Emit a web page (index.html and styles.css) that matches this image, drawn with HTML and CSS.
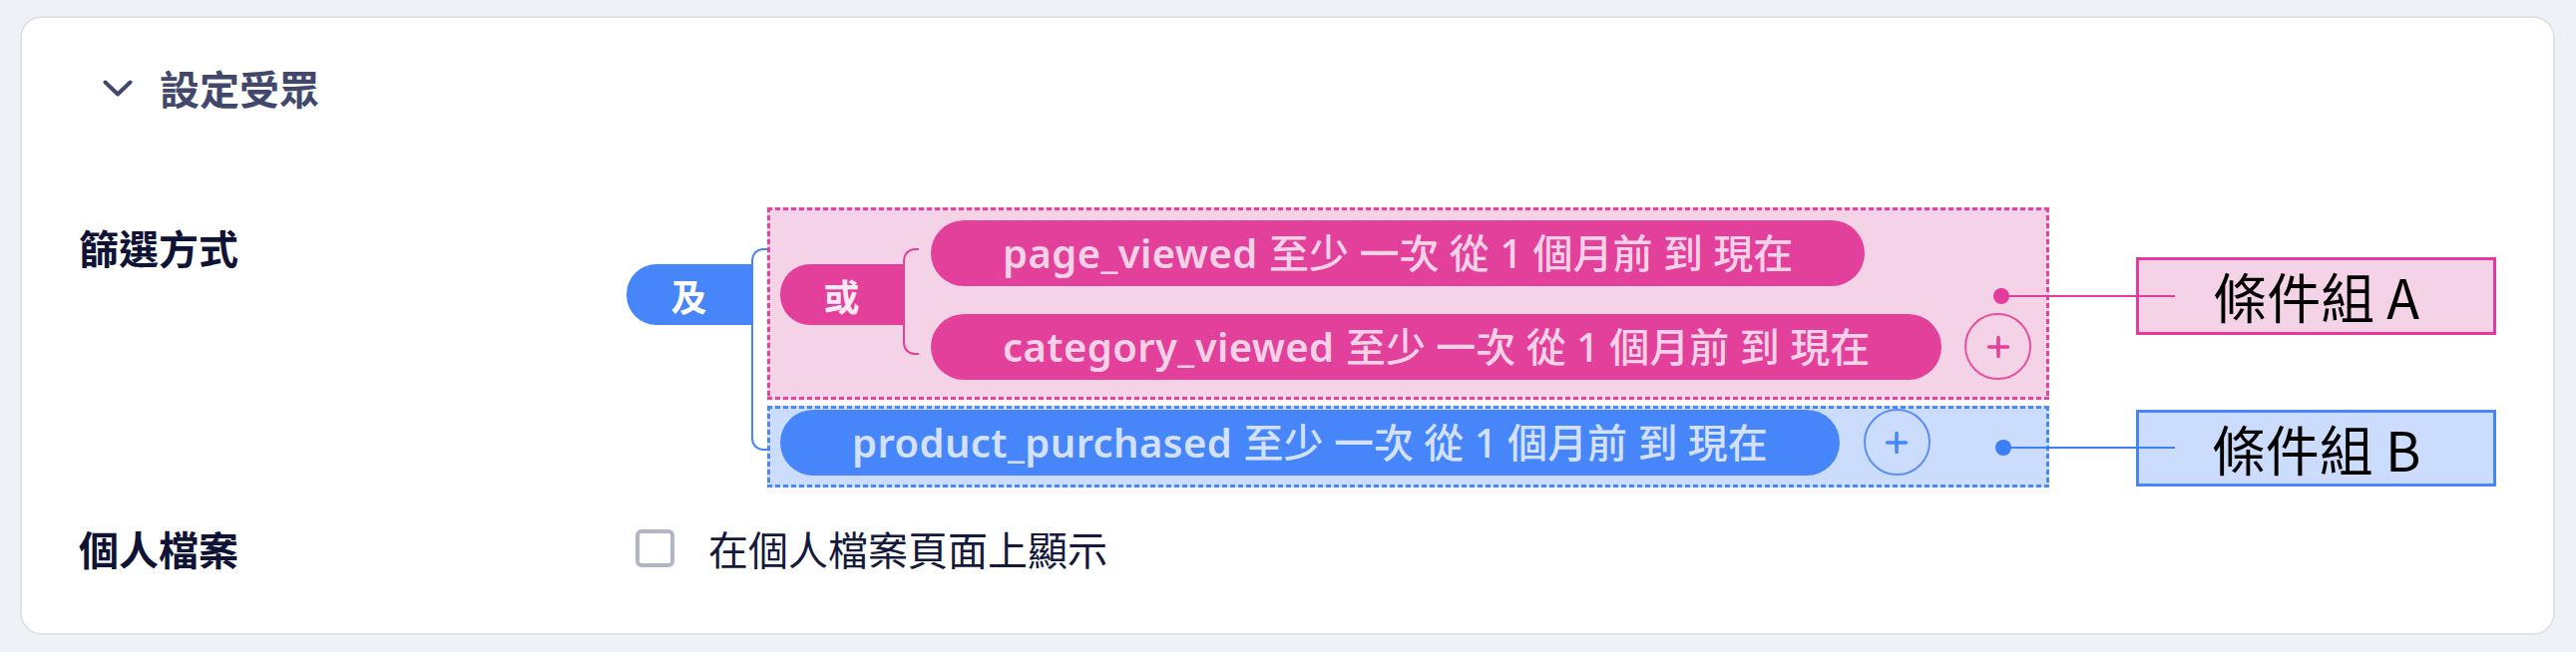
FILE: index.html
```html
<!DOCTYPE html>
<html lang="zh-Hant">
<head>
<meta charset="utf-8">
<title>設定受眾</title>
<link rel="stylesheet" href="styles.css">
</head>
<body>
<section class="card">
  <header class="card-head">
    <svg class="chev" viewBox="0 0 30 17" width="30" height="17" aria-hidden="true"><polyline points="2.5,2.5 15,14.5 27.5,2.5"/></svg>
    <h2 class="card-title">設定受眾</h2>
  </header>

  <div class="field filter-field">
    <div class="field-label">篩選方式</div>
    <div class="tree">
      <div class="op op-and">及</div>
      <div class="bracket bracket-and"></div>
      <div class="groups">
        <div class="group group-a">
          <div class="op op-or">或</div>
          <div class="bracket bracket-or"></div>
          <div class="rows">
            <div class="row">
              <div class="pill pill-pink"><span class="ev">page_viewed</span> 至少 一次 從 1 個月前 到 現在</div>
            </div>
            <div class="row">
              <div class="pill pill-pink"><span class="ev">category_viewed</span> 至少 一次 從 1 個月前 到 現在</div>
              <button class="add add-pink" type="button" aria-label="新增"><svg viewBox="0 0 24 24" width="24" height="24"><path d="M12 2.5v19M2.5 12h19"/></svg></button>
            </div>
          </div>
          <span class="pin pin-a"></span>
        </div>
        <div class="group group-b">
          <div class="row row-b">
            <div class="pill pill-blue"><span class="ev">product_purchased</span> 至少 一次 從 1 個月前 到 現在</div>
            <button class="add add-blue" type="button" aria-label="新增"><svg viewBox="0 0 24 24" width="24" height="24"><path d="M12 2.5v19M2.5 12h19"/></svg></button>
          </div>
          <span class="pin pin-b"></span>
        </div>
      </div>
      <div class="notes">
        <div class="note note-a">條件組 A</div>
        <div class="note note-b">條件組 B</div>
      </div>
    </div>
  </div>

  <div class="field profile-field">
    <div class="field-label">個人檔案</div>
    <label class="check"><span class="box"></span><span class="check-text">在個人檔案頁面上顯示</span></label>
  </div>
</section>
</body>
</html>
```

FILE: styles.css
```css
* { box-sizing: border-box; }
html, body { margin: 0; }
body {
  background: #eef1f5;
  font-family: "Noto Sans", "Noto Sans CJK TC", sans-serif;
}

.card {
  margin: 16px 21px 19px 20px;
  background: #fff;
  border: 2px solid #dfe2e8;
  border-radius: 22px;
  padding: 50px 57px 65px;
}

.card-head {
  display: flex;
  align-items: center;
  gap: 27px;
  height: 40px;
  margin-left: 24px;
}
.chev {
  fill: none;
  stroke: #41486c;
  stroke-width: 4;
  stroke-linecap: round;
  stroke-linejoin: round;
}
.card-title {
  margin: 0;
  font: 700 40px/40px "Noto Sans CJK TC", sans-serif;
  color: #41486c;
}

.field {
  display: grid;
  grid-template-columns: 549px auto;
  align-items: start;
}
.filter-field { margin-top: 100px; }
.profile-field { margin-top: 41px; align-items: center; }
.field-label {
  font: 700 40px/40px "Noto Sans CJK TC", sans-serif;
  color: #0f1437;
}
.filter-field .field-label { margin-top: 20px; }

/* tree */
.tree {
  display: flex;
  align-items: flex-start;
}
.op {
  height: 61px;
  display: flex;
  align-items: center;
  justify-content: center;
  font: 700 36px/1 "Noto Sans CJK TC", sans-serif;
  border-radius: 30px 0 0 30px;
  flex: none;
}
.op-and {
  width: 125px;
  margin-top: 57px;
  background: #4785fb;
  color: #fff;
}
.op-or {
  width: 123px;
  margin-top: 44px;
  background: #e2409b;
  color: #fde9f3;
}
.bracket {
  width: 16px;
  flex: none;
  align-self: stretch;
  border: 2px solid;
  border-right: 0;
  border-radius: 12px 0 0 12px;
}
.bracket-and { border-color: #4785fb; margin: 41px 0 37px; }
.bracket-or { border-color: #e2409b; margin: 28px 12px 25px 0; }

.groups {
  display: flex;
  flex-direction: column;
  gap: 6px;
}
.group {
  --dash: #e8409d;
  position: relative;
  display: flex;
  align-items: flex-start;
  background:
    repeating-linear-gradient(to right, var(--dash) 0 5px, transparent 5px 8px) left top / 100% 3px no-repeat,
    repeating-linear-gradient(to right, var(--dash) 0 5px, transparent 5px 8px) left bottom / 100% 3px no-repeat,
    repeating-linear-gradient(to bottom, var(--dash) 0 5px, transparent 5px 8px) left top / 3px 100% no-repeat,
    repeating-linear-gradient(to bottom, var(--dash) 0 5px, transparent 5px 8px) right top / 3px 100% no-repeat,
    var(--fill);
}
.group-a {
  --dash: #e8409d;
  --fill: #f4d3e6;
  padding: 13px 18px 20px 13px;
}
.group-b {
  --dash: #4a86fb;
  --fill: #cbdcfc;
  padding: 3px 18px 12px 13px;
}

.rows {
  display: flex;
  flex-direction: column;
  gap: 27px;
}
.row {
  display: flex;
  align-items: center;
  gap: 23px;
}
.row-b { gap: 24px; }

.pill {
  height: 66px;
  padding: 0 72px;
  border-radius: 33px;
  display: flex;
  align-items: center;
  white-space: pre;
  font: 500 40px/1 "Noto Sans", "Noto Sans CJK TC", sans-serif;
}
.ev {
  font-weight: 600;
  letter-spacing: 0.4px;
  margin-right: 1px;
}
.pill-pink { background: #e2409b; color: #f7d2e7; }
.pill-blue { background: #4785fb; color: #d3e1fe; }

.add {
  width: 67px;
  height: 67px;
  flex: none;
  padding: 0;
  border-radius: 50%;
  border: 2px solid;
  background: transparent;
  display: flex;
  align-items: center;
  justify-content: center;
}
.add svg {
  fill: none;
  stroke-width: 3.5;
  stroke-linecap: round;
}
.add-pink { border-color: #e5519f; }
.add-pink svg { stroke: #e2409b; }
.add-blue { border-color: #5a90f6; }
.add-blue svg { stroke: #4785fb; }

/* annotation pins (dot + leader line, drawn over the boxes) */
.pin {
  position: absolute;
  right: -126px;
  height: 16px;
  background: linear-gradient(var(--pin), var(--pin)) right center / calc(100% - 8px) 2px no-repeat;
  z-index: 1;
}
.pin::before {
  content: "";
  position: absolute;
  left: 0;
  top: 0;
  width: 16px;
  height: 16px;
  border-radius: 50%;
  background: var(--pin);
}
.pin-a { --pin: #e5399c; top: 81px; width: 182px; }
.pin-b { --pin: #3a7ff6; top: 34px; width: 180px; }

.notes {
  display: flex;
  flex-direction: column;
  gap: 75px;
  margin-left: 87px;
  margin-top: 50px;
}
.note {
  width: 361px;
  height: 78px;
  border: 3px solid;
  display: flex;
  align-items: center;
  justify-content: center;
  font: 400 54px/1 "Noto Sans CJK TC", sans-serif;
  color: #000;
}
.note-a { background: #f4d3e6; border-color: #e5399c; }
.note-b { background: #ccdcfc; border-color: #4785fb; height: 77px; }

/* profile */
.check {
  display: flex;
  align-items: center;
  gap: 34px;
  margin-left: 9px;
  font: 400 40px/40px "Noto Sans CJK TC", sans-serif;
  color: #141a3c;
}
.box {
  width: 39px;
  height: 38px;
  border: 4px solid #b2b6c4;
  border-radius: 6px;
  flex: none;
}
```
